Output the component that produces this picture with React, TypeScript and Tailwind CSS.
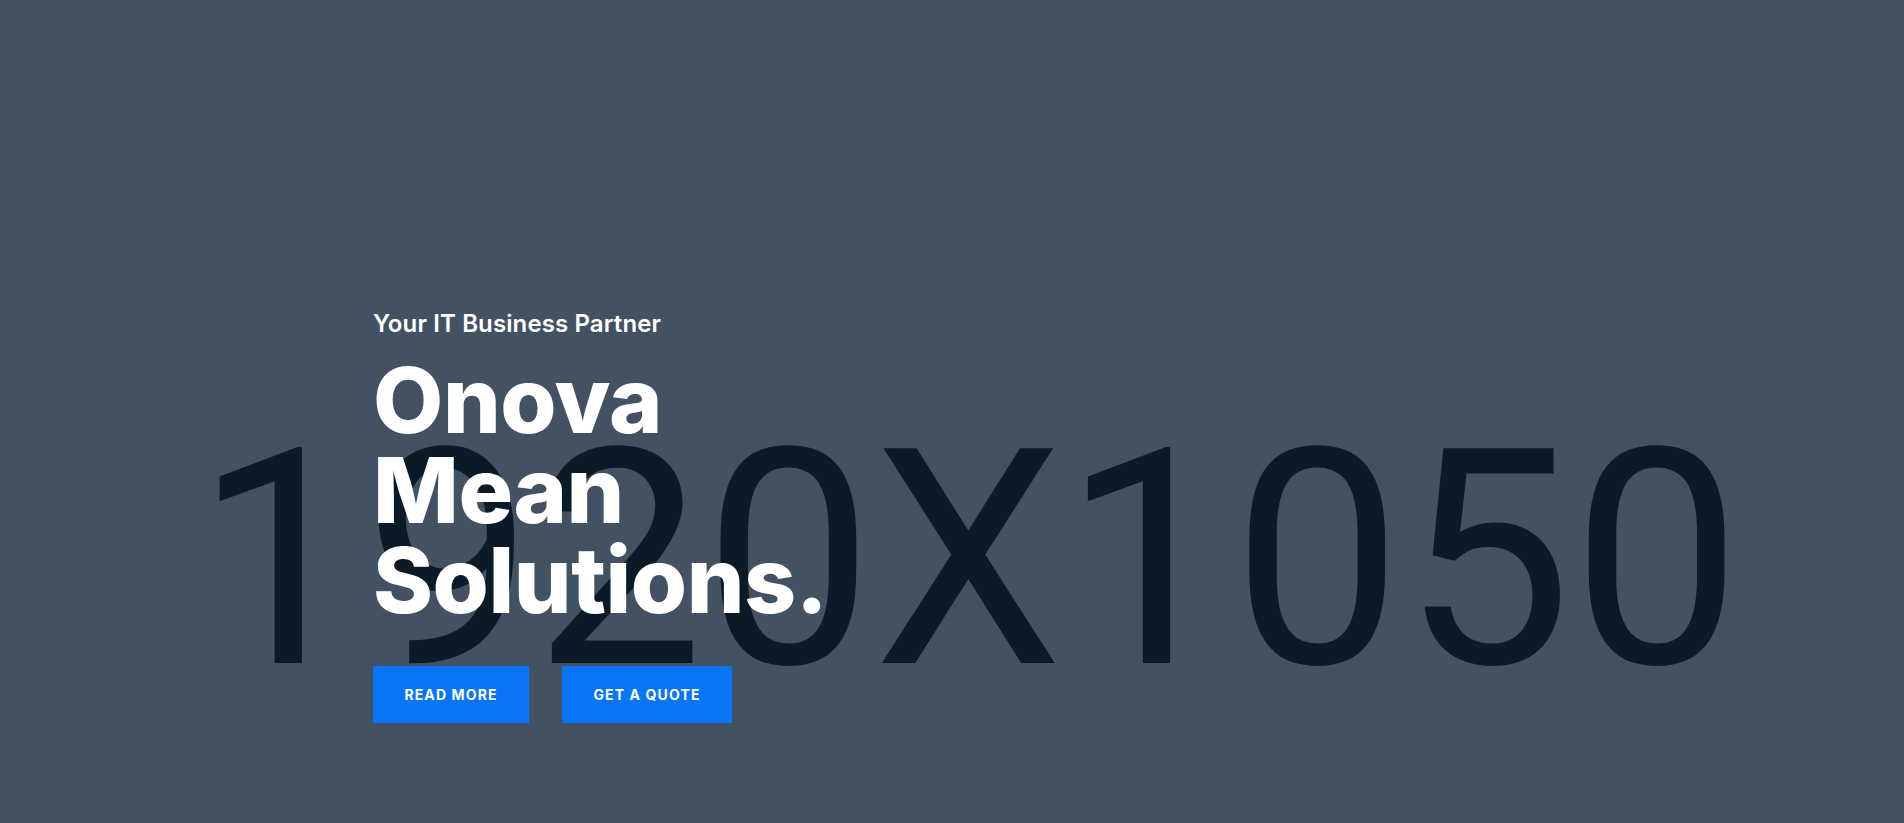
import type { ReactNode } from 'react'

function HeroButton({ children, width }: { children: ReactNode; width: string }) {
  return (
    <a
      href="#"
      className={`flex items-center justify-center h-[57px] ${width} bg-[#0a76f7] text-white text-[14px] font-bold uppercase tracking-[0.08em]`}
    >
      {children}
    </a>
  )
}

export default function App() {
  return (
    <section className="relative h-screen w-full overflow-hidden bg-[#435262] font-['Inter',sans-serif]">
      {/* placeholder image label */}
      <div className="absolute left-0 right-0 top-[409px] flex justify-center pl-[32px] pointer-events-none select-none">
        <span className="font-['Roboto',sans-serif] text-[302px] leading-none font-normal text-[#0b1a27]">
          1920X1050
        </span>
      </div>

      <div className="relative mx-auto w-[1158px] pt-[308px] flex flex-col">
        <p className="text-[24px] leading-[32px] font-semibold text-white tracking-[0.005em]">
          Your IT Business Partner
        </p>
        <h1 className="mt-[15px] text-[91px] leading-[90px] font-extrabold text-white tracking-[-0.005em]">
          Onova
          <br />
          Mean
          <br />
          Solutions.
        </h1>
        <div className="mt-[41px] flex gap-[33px]">
          <HeroButton width="w-[156px]">Read More</HeroButton>
          <HeroButton width="w-[170px]">Get a Quote</HeroButton>
        </div>
      </div>
    </section>
  )
}
